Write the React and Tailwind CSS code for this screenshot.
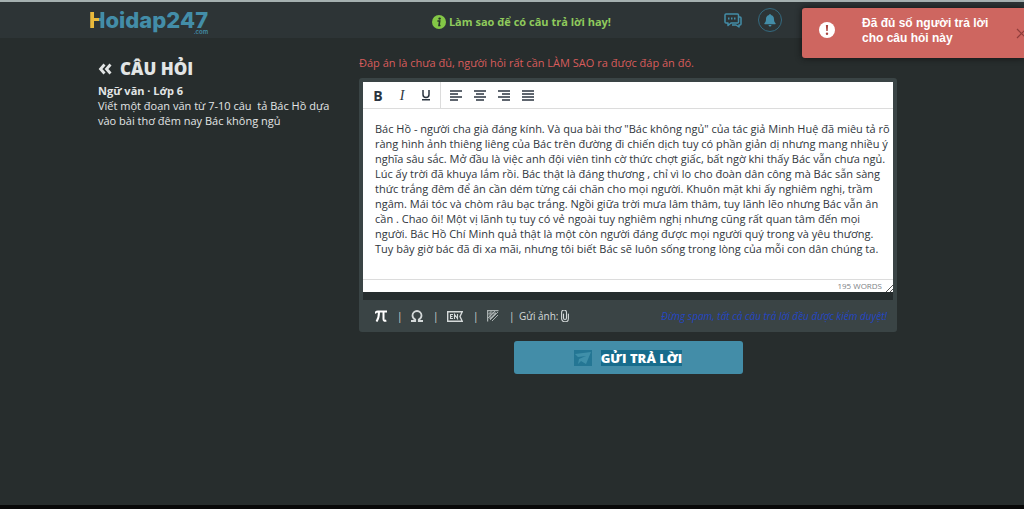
import React, { useState } from "react";

const answerLines = [
  'Bác Hồ - người cha già đáng kính. Và qua bài thơ "Bác không ngủ" của tác giả Minh Huệ đã miêu tả rõ',
  "ràng hình ảnh thiêng liêng của Bác trên đường đi chiến dịch tuy có phần giản dị nhưng mang nhiều ý",
  "nghĩa sâu sắc. Mở đầu là việc anh đội viên tình cờ thức chợt giấc, bất ngờ khi thấy Bác vẫn chưa ngủ.",
  "Lúc ấy trời đã khuya lắm rồi. Bác thật là đáng thương , chỉ vì lo cho đoàn dân công mà Bác sẵn sàng",
  "thức trắng đêm để ân cần dém từng cái chăn cho mọi người. Khuôn mặt khi ấy nghiêm nghị, trầm",
  "ngâm. Mái tóc và chòm râu bạc trắng. Ngồi giữa trời mưa lâm thâm, tuy lãnh lẽo nhưng Bác vẫn ân",
  "cần . Chao ôi! Một vị lãnh tụ tuy có vẻ ngoài tuy nghiêm nghị nhưng cũng rất quan tâm đến mọi",
  "người. Bác Hồ Chí Minh quả thật là một còn người đáng được mọi người quý trong và yêu thương.",
  "Tuy bây giờ bác đã đi xa mãi, nhưng tôi biết Bác sẽ luôn sống trong lòng của mỗi con dân chúng ta.",
];

const alignments = [
  { label: "Căn trái", d: "M0 1h12M0 4h8M0 7h12M0 10h8" },
  { label: "Căn giữa", d: "M0 1h12M2 4h8M0 7h12M2 10h8" },
  { label: "Căn phải", d: "M0 1h12M4 4h8M0 7h12M4 10h8" },
  { label: "Căn đều", d: "M0 1h12M0 4h12M0 7h12M0 10h12" },
];

const Logo = () => (
  <a href="#home" className="relative font-['Inter',sans-serif] text-[22px] leading-6 font-extrabold text-[#438da8]">
    <span className="bg-linear-to-r from-[#e9b93c] from-60% to-[#438da8] to-60% bg-clip-text text-transparent">H</span>
    oidap247
    <span className="absolute right-0 -bottom-1 text-[6px] leading-2 font-semibold">.com</span>
  </a>
);

const Header = () => (
  <header className="flex h-[38px] items-center border-t-2 border-[#a5b0b0] bg-[#2d3436] pr-[242px] pl-[89px]">
    <Logo />
    <a href="#tips" className="mr-[113px] ml-auto flex items-center gap-[3px] pt-1 text-[11px] font-bold text-[#8fca5c]">
      <svg viewBox="0 0 14 14" className="size-[14px]" aria-hidden="true">
        <circle cx="7" cy="7" r="7" fill="#83c746" />
        <circle cx="7.6" cy="3.6" r="1.2" fill="#26302a" />
        <path d="M5.4 6h2.3L7 10.5h1.5" fill="none" stroke="#26302a" strokeWidth="1.6" />
      </svg>
      Làm sao để có câu trả lời hay!
    </a>
    <div className="flex items-center gap-4">
      <button type="button" aria-label="Tin nhắn" className="text-[#438da8]">
        <svg viewBox="0 0 18 15" className="h-[15px] w-[18px]" fill="none" stroke="currentColor" strokeWidth="1.5" strokeLinejoin="round">
          <path d="M2 1h11.500q1 0 1 1v7q0 1-1 1H7l-3 2.500V10H2q-1 0-1-1V2q0-1 1-1z" />
          <path d="M15 4h1q1 0 1 1v6q0 1-1 1h-1v2l-3-2H8" />
          <path d="M4 5.500h1.500M7 5.500h1.500M10 5.500h1.500" strokeWidth="1.800" />
        </svg>
      </button>
      <button type="button" aria-label="Thông báo" className="flex size-6 items-center justify-center rounded-full border border-[#346a80] text-[#438da8]">
        <svg viewBox="0 0 12 13" className="h-[13px] w-3" fill="currentColor">
          <path d="M6 0q.9 0 .9 1C9 1.500 10 3 10 5c0 2.500.7 3.300 1.600 4.200q.4 1-.5 1H.9q-.9 0-.5-1C1.300 8.300 2 7.500 2 5c0-2 1-3.500 3.100-4Q5.100 0 6 0zM4.500 11h3Q7.300 12.500 6 12.500T4.500 11z" />
        </svg>
      </button>
    </div>
  </header>
);

const Toast = ({ onClose }) => (
  <div
    role="alert"
    className="absolute top-2 right-0 flex h-[50px] w-[222px] items-start rounded-l-[3px] bg-[#ce6660] font-['Liberation_Sans',Arial,sans-serif] text-white shadow-[0_0_6px_#111]"
  >
    <svg viewBox="0 0 16 16" className="mt-[14px] ml-[17px] size-4" aria-hidden="true">
      <circle cx="8" cy="8" r="8" fill="#fff" />
      <path d="M6.900 3h2.200l-.4 6H7.300z" fill="#a9443f" />
      <circle cx="8" cy="11.800" r="1.200" fill="#a9443f" />
    </svg>
    <p className="mt-2 ml-[27px] text-[12px] leading-[15px] font-bold">
      Đã đủ số người trả lời
      <br />
      cho câu hỏi này
    </p>
    <button type="button" aria-label="Đóng" onClick={onClose} className="absolute top-5 -right-[3px] text-[#8f3d3b]">
      <svg viewBox="0 0 11 11" className="size-[11px]" stroke="currentColor" strokeWidth="1.200">
        <path d="M1 1l9 9M10 1l-9 9" />
      </svg>
    </button>
  </div>
);

const Question = () => (
  <aside className="w-[230px] shrink-0 pt-[21px]">
    <h1 className="flex items-center gap-2 text-[17px] leading-5 font-extrabold">
      <a href="#back" aria-label="Quay lại">
        <svg viewBox="0 0 14 12" className="h-3 w-[14px]" fill="none" stroke="currentColor" strokeWidth="2.800">
          <path d="M6.500 1.500L2.500 6l4 4.500M12.500 1.500L8.500 6l4 4.500" />
        </svg>
      </a>
      CÂU HỎI
    </h1>
    <h2 className="mt-1 text-[11px] leading-[15px] font-bold">Ngữ văn · Lớp 6</h2>
    <p className="text-[11px] leading-[15px] whitespace-pre">
      {"Viết một đoạn văn từ 7-10 câu  tả Bác Hồ dựa\nvào bài thơ đêm nay Bác không ngủ"}
    </p>
  </aside>
);

const Toolbar = () => (
  <div className="flex h-[27px] border-b border-[#dcdcdc] text-[#2b3440]">
    <div className="flex items-center gap-3 border-r border-[#dcdcdc] pr-2 pl-[9px] text-[14px]">
      <button type="button" aria-label="Đậm" className="w-3 font-bold">B</button>
      <button type="button" aria-label="Nghiêng" className="w-3 font-['Liberation_Serif',serif] italic">I</button>
      <button type="button" aria-label="Gạch chân" className="flex w-3 justify-center">
        <svg viewBox="0 0 10 12" className="h-3 w-[10px]" fill="none" stroke="currentColor" strokeWidth="1.500">
          <path d="M2 1v4.500a3 3 0 006 0V1M1 10.800h8" />
        </svg>
      </button>
    </div>
    <div className="flex items-center gap-3 pl-[9px]">
      {alignments.map((item) => (
        <button key={item.label} type="button" aria-label={item.label}>
          <svg viewBox="0 0 12 11" className="h-[11px] w-3" stroke="currentColor" strokeWidth="1.700">
            <path d={item.d} />
          </svg>
        </button>
      ))}
    </div>
  </div>
);

const Divider = () => <span className="w-1 text-center">|</span>;

const Extras = () => (
  <div className="flex h-8 items-center px-3 text-[10px] text-[#d5dada]">
    <div className="flex items-center gap-[10px]">
      <button type="button" aria-label="Công thức">
        <svg viewBox="0 0 12 12" className="size-3" fill="none" stroke="#fff" strokeWidth="2">
          <path d="M0 3.500Q.8 1.500 3 1.500h9M4 2q0 6-2.500 9.500M8.500 2v7q0 2.500 2.800 1.500" />
        </svg>
      </button>
      <Divider />
      <button type="button" aria-label="Ký tự đặc biệt">
        <svg viewBox="0 0 12 12" className="size-3" fill="none" stroke="currentColor" strokeWidth="1.800">
          <path d="M0 11h4.200V9.500C2.500 8.700 1.500 7.300 1.500 5.500a4.500 4.500 0 019 0c0 1.800-1 3.200-2.700 4V11H12" />
        </svg>
      </button>
      <Divider />
      <button type="button" aria-label="Từ điển">
        <svg viewBox="0 0 16 11" className="h-[11px] w-4" fill="none" stroke="currentColor" strokeWidth="1.400">
          <path d="M.7.7h14.600L13 5.500l2.300 4.800H.7z" />
          <path d="M6 3.500H3.500v4H6M3.500 5.500h2M7.500 8V3.500l3 4V3" strokeWidth="1.100" />
        </svg>
      </button>
      <Divider />
      <button type="button" aria-label="Vẽ hình">
        <svg viewBox="0 0 12 12" className="size-3 text-[#a9b0b0]" fill="none" stroke="currentColor">
          <path d="M.5 11.500V.5h11" strokeWidth="1.500" />
          <path d="M1 4.500L4.500 1M1 8L8 1M3 10l8-8M5 11l6-6" />
          <path d="M3 3h6L3 9z" fill="currentColor" fillOpacity=".4" />
        </svg>
      </button>
      <Divider />
    </div>
    <label className="ml-1.5 flex items-center gap-[3px]">
      Gửi ảnh:
      <svg viewBox="0 0 8 12" className="h-3 w-2" fill="none" stroke="currentColor" strokeWidth="1.100" strokeLinecap="round">
        <path d="M2.500 4v4a1.500 1.500 0 003 0V2.500a1.900 1.900 0 00-4.900 0v6a3.400 3.400 0 006.800 0V4" />
      </svg>
      <input type="file" accept="image/*" className="sr-only" />
    </label>
    <p className="ml-auto -mr-1.5 text-[10px] text-[#2446c4] italic">
      Đừng spam, tất cả câu trả lời đều được kiểm duyệt!
    </p>
  </div>
);

const AnswerForm = () => {
  const [answer, setAnswer] = useState(answerLines.join("\n"));

  return (
    <form className="flex min-w-0 flex-1 flex-col" onSubmit={(e) => e.preventDefault()}>
      <p className="pt-[17px] text-[11px] leading-[15px] text-[#d85c5c]">
        Đáp án là chưa đủ, người hỏi rất cần LÀM SAO ra được đáp án đó.
      </p>
      <div className="mt-2 rounded-[3px] bg-[#3a4445] px-1 pt-1">
        <div className="bg-white">
          <Toolbar />
          <textarea
            aria-label="Câu trả lời"
            value={answer}
            onChange={(e) => setAnswer(e.target.value)}
            rows={9}
            className="block h-[170px] w-full resize-none overflow-hidden pt-3 pl-3 font-['Open_Sans','Noto_Sans',sans-serif] text-[11px] leading-[15px] whitespace-pre text-[#30363c] outline-none"
          />
          <div className="flex h-[13px] items-center justify-end gap-1 border-t border-[#dcdcdc] text-[8px] text-[#7c8186]">
            195 WORDS
            <svg viewBox="0 0 7 7" className="size-[7px] self-end" stroke="#555" aria-hidden="true">
              <path d="M0 7l7-7M4 7l3-3" />
            </svg>
          </div>
        </div>
        <div className="h-2 bg-[#262d2e]" />
        <Extras />
      </div>
      <button
        type="submit"
        className="mt-[9px] flex h-[33px] w-[229px] items-center justify-center gap-[9px] self-center rounded-[3px] bg-[#438da8] text-[13px] font-extrabold text-white"
      >
        <svg viewBox="0 0 18 16" className="h-4 w-[18px]" aria-hidden="true">
          <rect width="18" height="16" fill="#247694" />
          <path d="M1 4l16-2-5 12-5-3-3 3 1-5 7-3-8 1z" fill="#3f8fa9" />
        </svg>
        <span className="bg-[#176c8c] leading-4">GỬI TRẢ LỜI</span>
      </button>
    </form>
  );
};

export default function App() {
  const [showToast, setShowToast] = useState(true);

  return (
    <div className="relative flex min-h-screen flex-col overflow-hidden border-b-4 border-[#080808] bg-[#272d2d] font-['Open_Sans','Noto_Sans',sans-serif] text-[#e2e5e5]">
      <Header />
      <main className="flex flex-1 gap-[31px] pr-[127px] pl-[98px]">
        <Question />
        <AnswerForm />
      </main>
      {showToast && <Toast onClose={() => setShowToast(false)} />}
    </div>
  );
}
